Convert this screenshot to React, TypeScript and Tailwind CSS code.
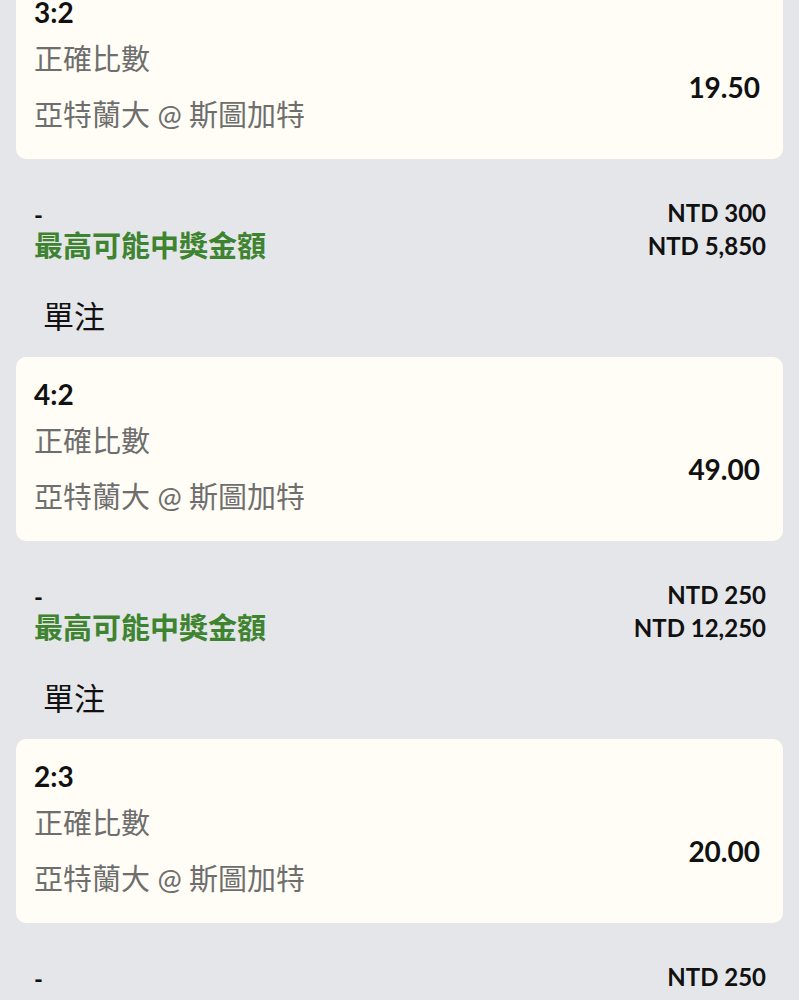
import React from "react";

type Bet = { score: string; odds: string; stake: string; win: string };

const bets: Bet[] = [
  { score: "3:2", odds: "19.50", stake: "NTD 300", win: "NTD 5,850" },
  { score: "4:2", odds: "49.00", stake: "NTD 250", win: "NTD 12,250" },
  { score: "2:3", odds: "20.00", stake: "NTD 250", win: "" },
];

function Card({ bet }: { bet: Bet }) {
  return (
    <div className="mx-[16px] rounded-[10px] bg-[#fffdf5] pt-[18px] pb-[16px] pl-[18px] pr-[23px]">
      <div className="h-[38px] flex items-center text-[28px] font-bold text-[#111] leading-[38px]">
        {bet.score}
      </div>
      <div className="flex items-center justify-between">
        <div className="flex flex-col">
          <div className="h-[56px] flex items-center text-[29px] leading-[56px] text-[#6e6e6e]">
            正確比數
          </div>
          <div className="h-[56px] flex items-center text-[29px] leading-[56px] text-[#6e6e6e]">
            亞特蘭大 @ 斯圖加特
          </div>
        </div>
        <div className="text-[28px] font-bold text-[#111]">{bet.odds}</div>
      </div>
    </div>
  );
}

function Summary({ bet, last }: { bet: Bet; last: boolean }) {
  return (
    <div className="mt-[37px] pl-[34px] pr-[33px]">
      <div className="flex justify-between items-center h-[33px] leading-[33px]">
        <span className="text-[24px] font-bold text-[#111] pt-[3px]">-</span>
        <span className="text-[24px] font-bold text-[#111]">{bet.stake}</span>
      </div>
      {!last && (
        <div className="flex justify-between items-center h-[33px] leading-[33px]">
          <span className="text-[29px] font-bold text-[#3e8430]">最高可能中獎金額</span>
          <span className="text-[24px] font-bold text-[#111]">{bet.win}</span>
        </div>
      )}
    </div>
  );
}

export default function App() {
  return (
    <div
      className="w-[799px] h-[1000px] overflow-hidden bg-[#e5e6e9]"
      style={{ fontFamily: 'Lato, "Noto Sans CJK TC", "Noto Sans", sans-serif' }}
    >
      <div className="-mt-[25px]">
        {bets.map((b, i) => (
          <div key={i}>
            <Card bet={b} />
            <Summary bet={b} last={i === bets.length - 1} />
            {i < bets.length - 1 && (
              <div className="mt-[34px] mb-[21px] h-[40px] flex items-center pl-[43px] text-[31px] text-[#111] leading-[40px]">
                單注
              </div>
            )}
          </div>
        ))}
      </div>
    </div>
  );
}
